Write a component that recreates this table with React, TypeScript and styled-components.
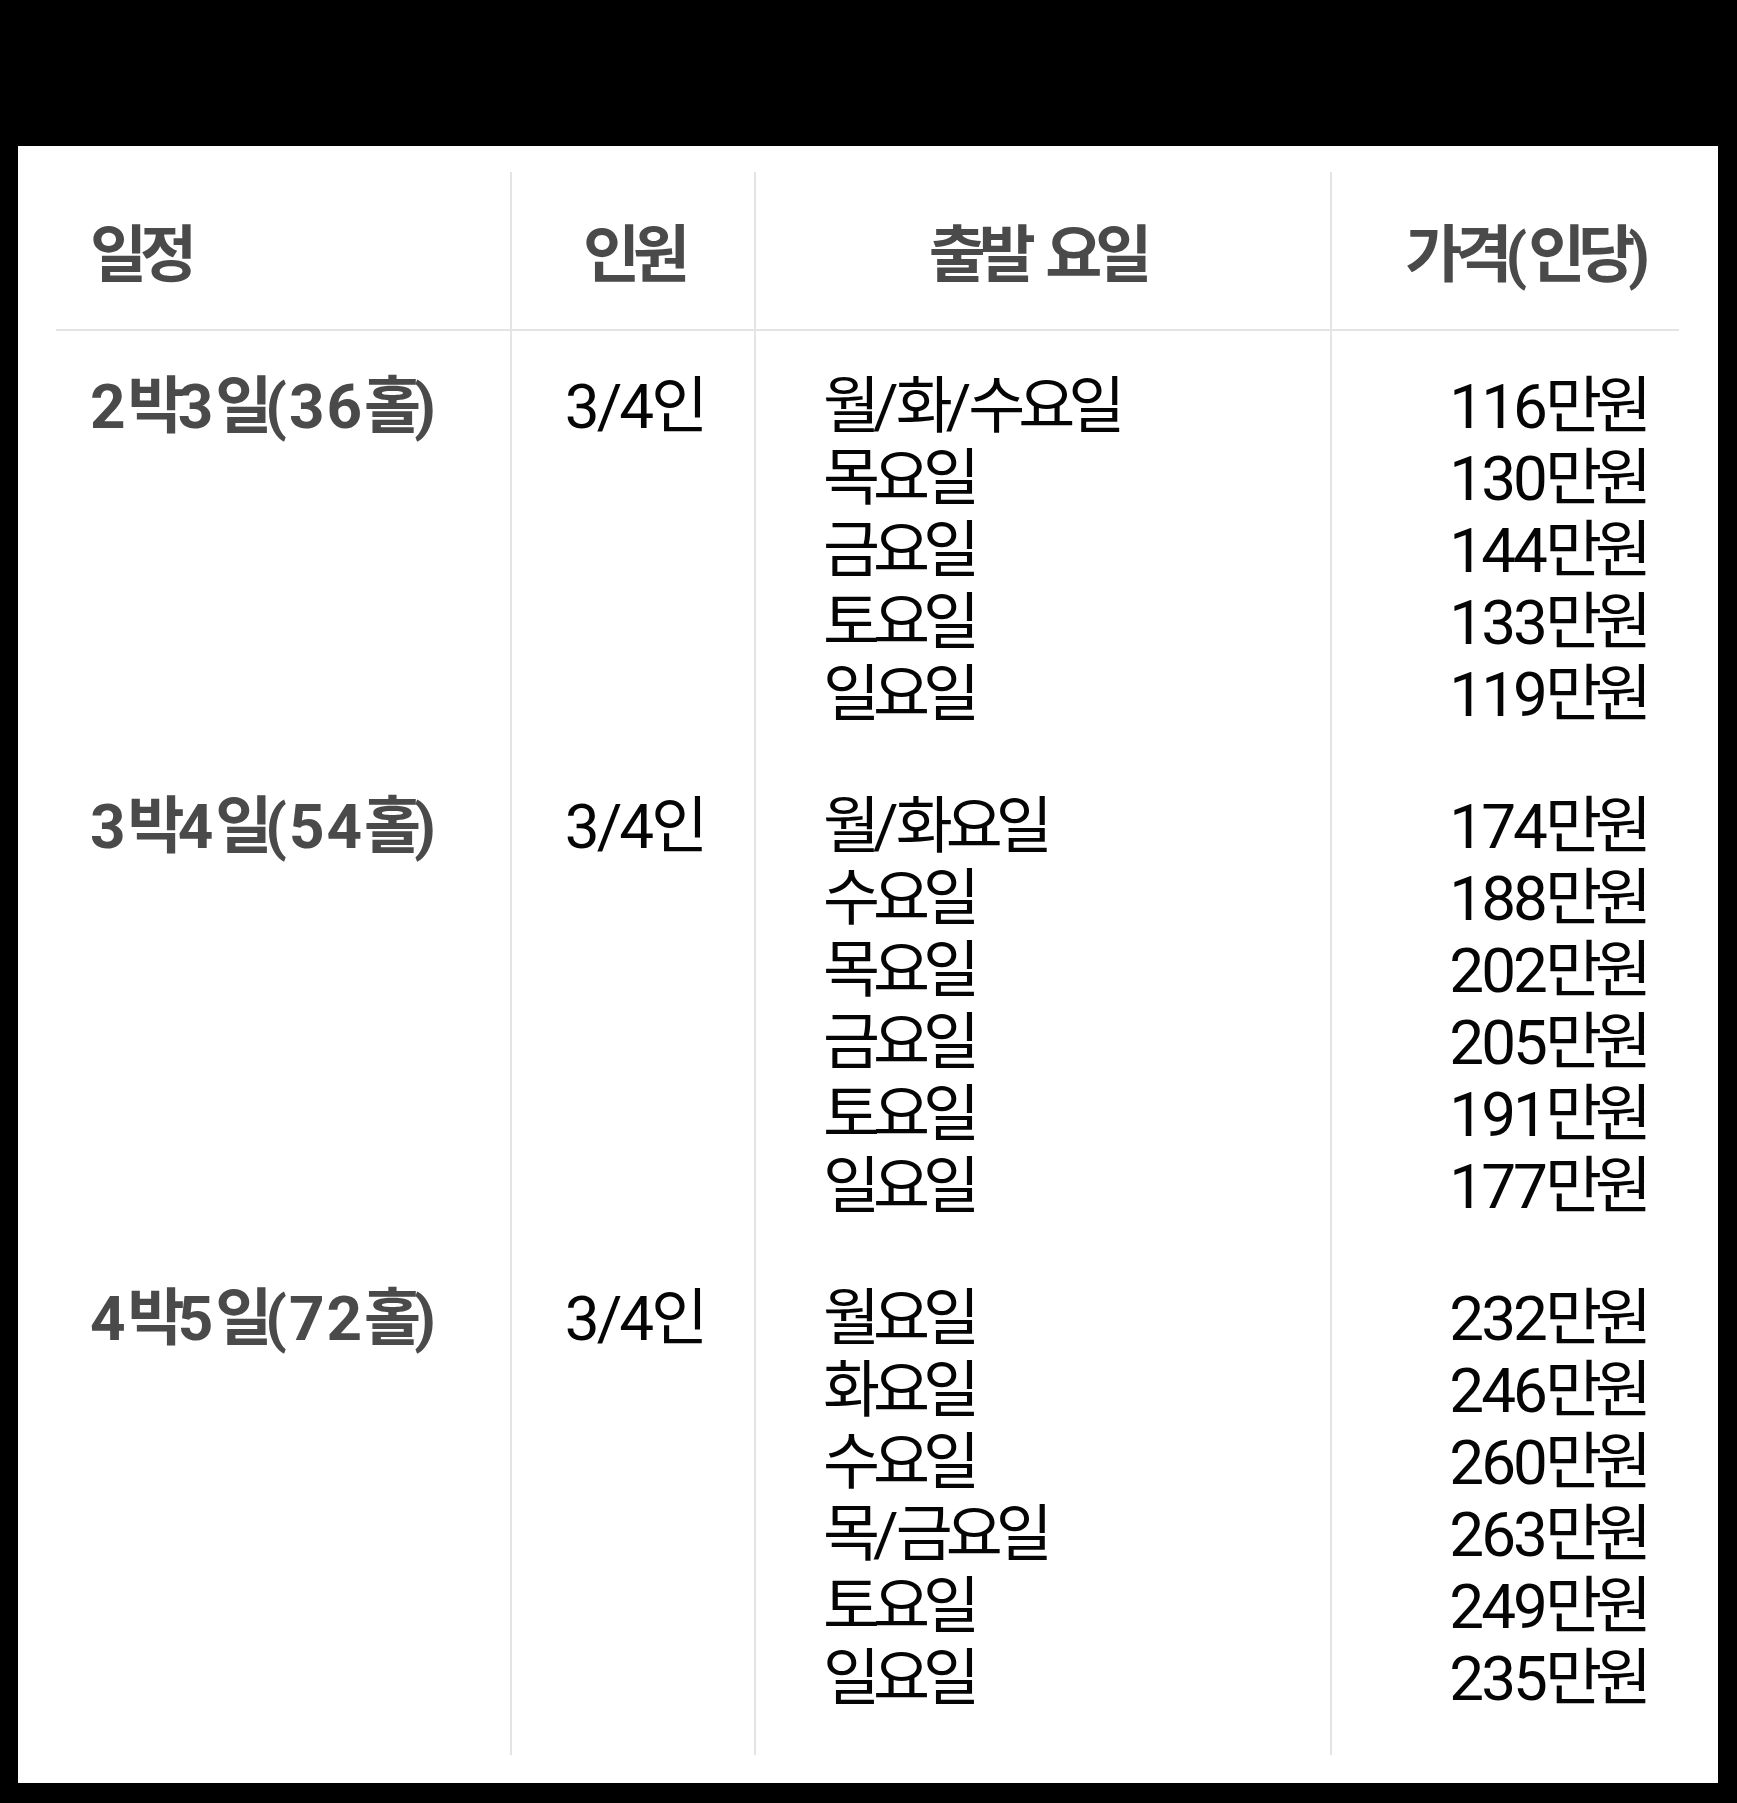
import React, { FC } from "react";
import styled, { createGlobalStyle } from "styled-components";

interface Group {
  schedule: string;
  people: string;
  days: string[];
  prices: string[];
}

const groups: Group[] = [
  {
    schedule: "2박3일(36홀)",
    people: "3/4인",
    days: ["월/화/수요일", "목요일", "금요일", "토요일", "일요일"],
    prices: ["116만원", "130만원", "144만원", "133만원", "119만원"],
  },
  {
    schedule: "3박4일(54홀)",
    people: "3/4인",
    days: ["월/화요일", "수요일", "목요일", "금요일", "토요일", "일요일"],
    prices: ["174만원", "188만원", "202만원", "205만원", "191만원", "177만원"],
  },
  {
    schedule: "4박5일(72홀)",
    people: "3/4인",
    days: ["월요일", "화요일", "수요일", "목/금요일", "토요일", "일요일"],
    prices: ["232만원", "246만원", "260만원", "263만원", "249만원", "235만원"],
  },
];

const GlobalStyle = createGlobalStyle`
  html, body {
    margin: 0;
    padding: 0;
    background: #000;
  }
  body {
    font-family: Roboto, "Noto Sans CJK KR", sans-serif;
  }
`;

const Page = styled.div`
  box-sizing: border-box;
  width: 1737px;
  min-height: 1803px;
  padding: 146px 19px 19px 18px;
  background: #000;
`;

const Panel = styled.div`
  background: #fff;
  padding: 26px 39px 28px 38px;
`;

const Row = styled.div`
  display: grid;
  grid-template-columns: 456px 244px 576px 1fr;
`;

const HeaderRow = styled(Row)`
  border-bottom: 2px solid #e4e4e4;
`;

const GroupRow = styled(Row)`
  --pad-top: 30px;
  --pad-bottom: 30px;
  &:first-child {
    --pad-top: 40px;
  }
  &:last-child {
    --pad-bottom: 40px;
  }
`;

type Align = "left" | "center" | "right";

const Cell = styled.div<{ $align: Align; $inset?: number }>`
  box-sizing: border-box;
  display: flex;
  flex-direction: column;
  align-items: ${(p) =>
    p.$align === "left" ? "flex-start" : p.$align === "right" ? "flex-end" : "center"};
  padding-left: ${(p) => (p.$align === "left" ? p.$inset ?? 34 : 0)}px;
  padding-right: ${(p) =>
    p.$align === "right" ? p.$inset ?? 34 : p.$align === "center" ? p.$inset ?? 0 : 0}px;
  font-size: 62px;
  line-height: 72px;
  border-right: 2px solid #e4e4e4;
  &:last-child {
    border-right: none;
  }
`;

const HeadCell = styled(Cell)`
  padding-top: 48px;
  padding-bottom: 37px;
  font-weight: 700;
  letter-spacing: 1px;
  color: #4a4a4a;
`;

const BodyCell = styled(Cell)<{ $strong?: boolean }>`
  padding-top: var(--pad-top);
  padding-bottom: var(--pad-bottom);
  font-weight: ${(p) => (p.$strong ? 700 : 400)};
  letter-spacing: ${(p) => (p.$strong ? "2px" : "-3px")};
  color: ${(p) => (p.$strong ? "#4a4a4a" : "#050505")};
`;

const Line = styled.div`
  white-space: nowrap;
`;

// Korean syllables run narrower than Noto CJK's full-width boxes in the reference
const Hangul = styled.span`
  letter-spacing: -7px;
`;

const HANGUL_RUN = /([\uAC00-\uD7A3]+)/;

const Text: FC<{ children: string }> = ({ children }) => (
  <Line>
    {children.split(HANGUL_RUN).map((part, i) =>
      i % 2 === 1 ? <Hangul key={i}>{part}</Hangul> : part
    )}
  </Line>
);

const App: FC = () => (
  <>
    <GlobalStyle />
    <Page>
      <Panel>
        <HeaderRow>
          <HeadCell $align="left">
            <Text>일정</Text>
          </HeadCell>
          <HeadCell $align="center">
            <Text>인원</Text>
          </HeadCell>
          <HeadCell $align="center" $inset={12}>
            <Text>출발 요일</Text>
          </HeadCell>
          <HeadCell $align="right" $inset={28}>
            <Text>가격(인당)</Text>
          </HeadCell>
        </HeaderRow>
        <div>
          {groups.map((g) => (
            <GroupRow key={g.schedule}>
              <BodyCell $align="left" $strong>
                <Text>{g.schedule}</Text>
              </BodyCell>
              <BodyCell $align="center">
                <Text>{g.people}</Text>
              </BodyCell>
              <BodyCell $align="left" $inset={67}>
                {g.days.map((d) => (
                  <Text key={d}>{d}</Text>
                ))}
              </BodyCell>
              <BodyCell $align="right">
                {g.prices.map((p) => (
                  <Text key={p}>{p}</Text>
                ))}
              </BodyCell>
            </GroupRow>
          ))}
        </div>
      </Panel>
    </Page>
  </>
);

export default App;
